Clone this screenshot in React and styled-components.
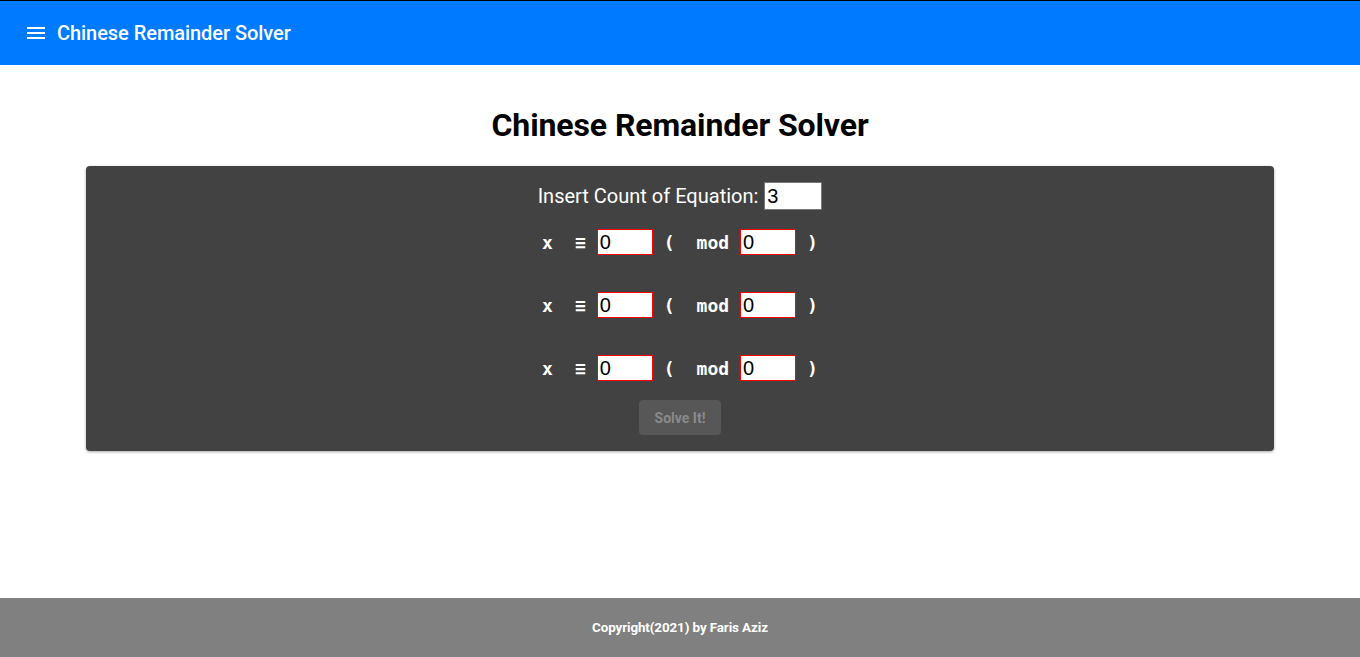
import React from 'react';
import styled, { createGlobalStyle } from 'styled-components';

const GlobalStyle = createGlobalStyle`
  html, body {
    margin: 0;
    padding: 0;
    font-family: Roboto, "Liberation Sans", Arial, sans-serif;
    background: #ffffff;
  }
`;

const Page = styled.div`
  min-height: 100vh;
  display: flex;
  flex-direction: column;
  box-sizing: border-box;
`;

const AppBar = styled.header`
  height: 64px;
  border-top: 1px solid #000;
  background: #007bff;
  display: flex;
  align-items: center;
  padding: 0 24px;
  gap: 9px;
  color: #fff;
`;

const MenuButton = styled.span`
  display: flex;
  align-items: center;
  width: 24px;
  height: 24px;
`;

const BarTitle = styled.h2`
  margin: 0;
  font-size: 20px;
  font-weight: 500;
  letter-spacing: -0.05px;
`;

const Main = styled.main`
  flex: 1;
  display: flex;
  flex-direction: column;
  align-items: stretch;
  padding: 0 86px;
`;

const Title = styled.h1`
  margin: 41px 0 22px;
  text-align: center;
  font-size: 32px;
  font-weight: 700;
  letter-spacing: -0.1px;
  color: #000;
  line-height: 1.2;
`;

const Panel = styled.section`
  background: #424242;
  border-radius: 4px;
  box-shadow: 0 1px 3px rgba(0, 0, 0, 0.35);
  padding: 16px 16px 16px;
  display: flex;
  flex-direction: column;
  align-items: center;
  color: #fff;
`;

const CountRow = styled.div`
  display: flex;
  align-items: center;
  gap: 6px;
  font-size: 20px;
  height: 28px;
`;

const Field = styled.input`
  box-sizing: border-box;
  width: ${p => p.$width}px;
  height: ${p => p.$height}px;
  border: 1px solid ${p => (p.$invalid ? '#ff0000' : '#767676')};
  background: #fff;
  padding: 0 2px;
  font-family: "Liberation Sans", Arial, sans-serif;
  font-size: 20px;
  color: #000;
  outline: none;
  border-radius: 0;
`;

const Equations = styled.div`
  display: flex;
  flex-direction: column;
  gap: 37px;
  margin: 19px 0;
`;

const EquationRow = styled.div`
  display: flex;
  align-items: center;
  justify-content: center;
  height: 26px;
`;

const Sym = styled.span`
  font-family: "DejaVu Sans Mono", "Liberation Mono", monospace;
  font-weight: 700;
  font-size: 18px;
  padding: 0 11px;
  color: #fff;
`;

const SolveButton = styled.button`
  width: 82px;
  height: 35px;
  border: none;
  border-radius: 4px;
  background: #575757;
  color: #8a8a8a;
  font-family: Roboto, "Liberation Sans", Arial, sans-serif;
  font-weight: 700;
  font-size: 14px;
  cursor: default;
`;

const Footer = styled.footer`
  height: 59px;
  background: #808080;
  display: flex;
  align-items: center;
  justify-content: center;
  color: #fff;
  font-weight: 700;
  font-size: 13.4px;
  letter-spacing: -0.1px;
`;

const MenuIcon = () => (
  <svg width="24" height="24" viewBox="0 0 24 24" fill="#fff">
    <path d="M3 18h18v-2H3v2zm0-5h18v-2H3v2zm0-7v2h18V6H3z" />
  </svg>
);

const equations = [0, 1, 2];

export default function App() {
  return (
    <Page>
      <GlobalStyle />
      <AppBar>
        <MenuButton>
          <MenuIcon />
        </MenuButton>
        <BarTitle>Chinese Remainder Solver</BarTitle>
      </AppBar>
      <Main>
        <Title>Chinese Remainder Solver</Title>
        <Panel>
          <CountRow>
            <span>Insert Count of Equation:</span>
            <Field $width={58} $height={28} defaultValue="3" />
          </CountRow>
          <Equations>
            {equations.map(i => (
              <EquationRow key={i}>
                <Sym>x</Sym>
                <Sym>≡</Sym>
                <Field $width={56} $height={26} $invalid defaultValue="0" />
                <Sym>(</Sym>
                <Sym>mod</Sym>
                <Field $width={56} $height={26} $invalid defaultValue="0" />
                <Sym>)</Sym>
              </EquationRow>
            ))}
          </Equations>
          <SolveButton disabled>Solve It!</SolveButton>
        </Panel>
      </Main>
      <Footer>Copyright(2021) by Faris Aziz</Footer>
    </Page>
  );
}
